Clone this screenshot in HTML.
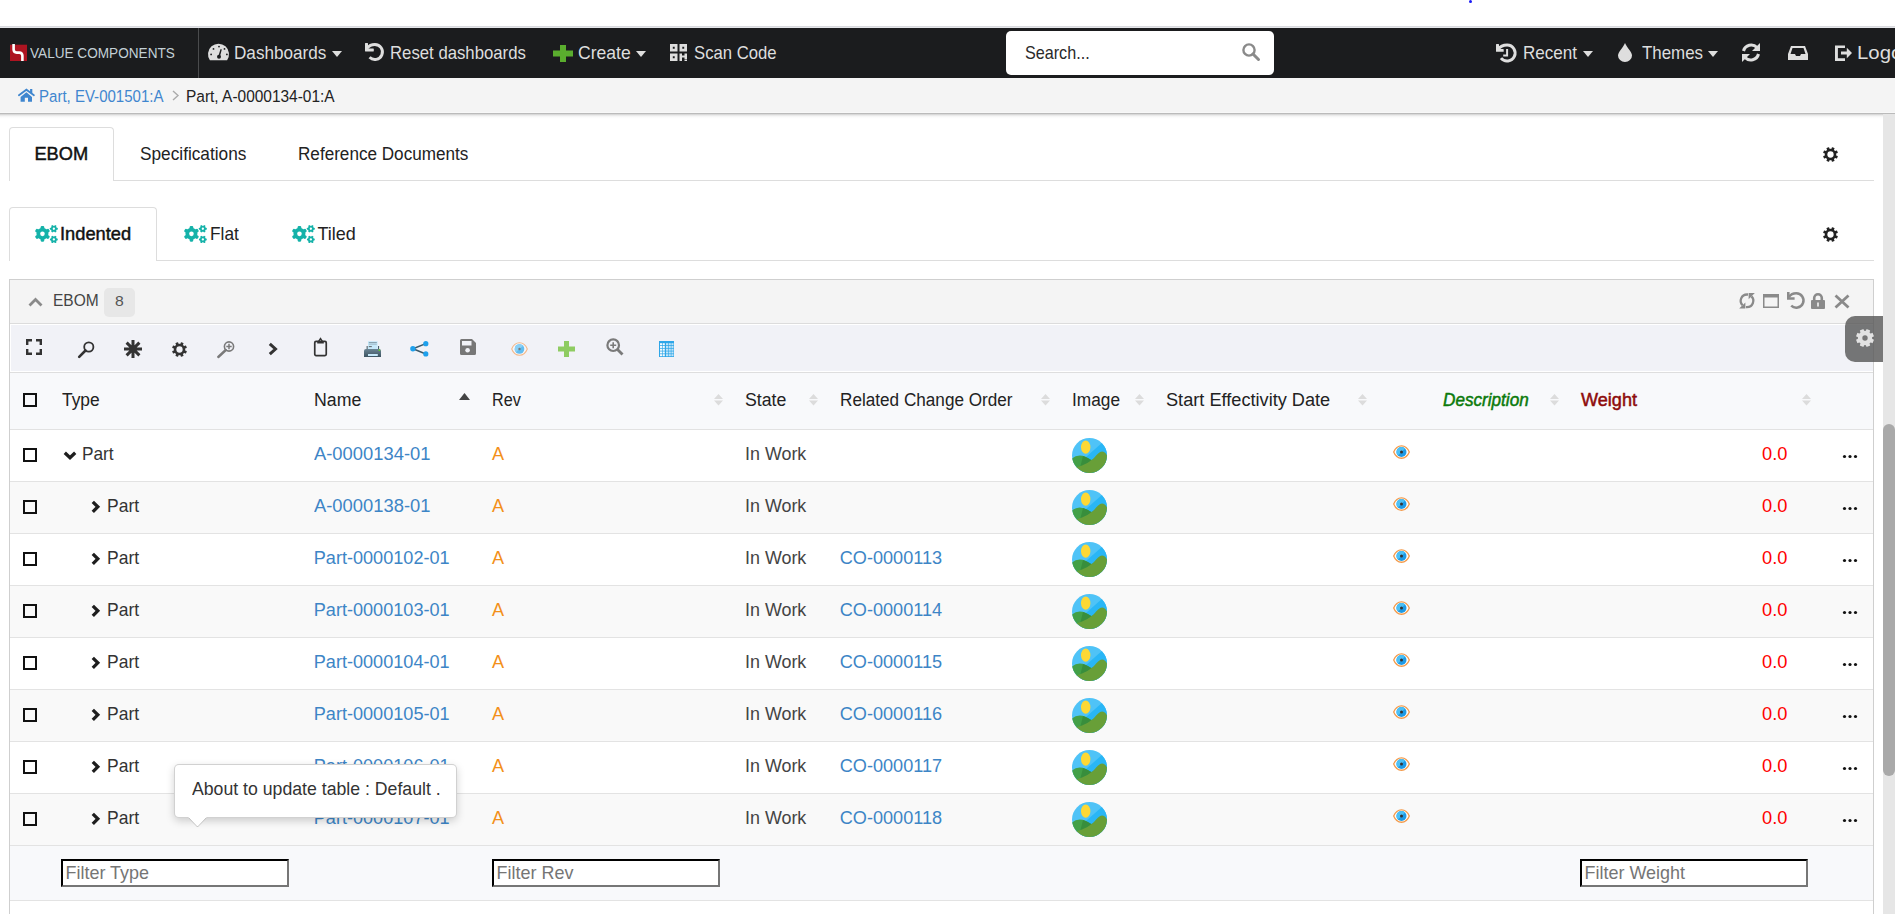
<!DOCTYPE html>
<html><head><meta charset="utf-8"><style>
html,body{margin:0;padding:0;}
body{width:1895px;height:914px;overflow:hidden;position:relative;background:#fff;font-family:"Liberation Sans",sans-serif;}
.t{position:absolute;white-space:nowrap;line-height:1;transform-origin:0 0;}
svg{overflow:visible}
</style></head><body>
<div style="position:absolute;left:0px;top:26px;width:1895px;height:1px;background:#d9dade"></div>
<div style="position:absolute;left:0px;top:27px;width:1895px;height:1px;background:#e4e5e9"></div>
<div style="position:absolute;left:1469px;top:0px;width:3px;height:3px;background:#1a1af5;border-radius:50%"></div>
<div style="position:absolute;left:0px;top:28px;width:1895px;height:50px;background:#1b1c1e"></div>
<div style="position:absolute;left:198px;top:28px;width:1px;height:50px;background:#4a4b4d"></div>
<svg style="position:absolute;left:10px;top:44px" width="17" height="17" viewBox="0 0 17 17"><rect x="0" y="0.7" width="17" height="16.3" fill="#ad1421"/><path d="M3.6 0 V5.5 Q3.6 8.6 6.7 8.6 H9.3 Q12.4 8.6 12.4 11.7 V17" stroke="#fff" stroke-width="2.6" fill="none"/></svg>
<div class="t" style="left:29.86px;top:45.17px;font-size:15.22px;color:#c3d0d6;font-weight:normal;font-style:normal;transform:scaleX(0.8936);">VALUE COMPONENTS</div>
<svg style="position:absolute;left:208px;top:43px" width="22" height="18" viewBox="0 0 22 18"><path d="M1.9 17.2 A10.5 10.5 0 1 1 19.1 17.2 Z" fill="#dedede"/><g fill="#1b1c1e"><circle cx="11" cy="13.8" r="2"/><path d="M10.2 13.5 L12.6 6 L13.8 6.4 L11.8 14 Z"/><circle cx="5.5" cy="5.9" r="0.9"/><circle cx="11" cy="3.6" r="0.9"/><circle cx="16.5" cy="5.9" r="0.9"/><circle cx="3.1" cy="11.4" r="0.9"/><circle cx="18.9" cy="11.4" r="0.9"/></g></svg>
<div class="t" style="left:234.23px;top:43.89px;font-size:18.84px;color:#dedede;font-weight:normal;font-style:normal;transform:scaleX(0.9095);">Dashboards</div>
<svg style="position:absolute;left:332px;top:51px" width="10" height="6" viewBox="0 0 10 6"><path d="M0 0 H10 L5 6 Z" fill="#dedede"/></svg>
<svg style="position:absolute;left:365px;top:43px" width="19" height="19" viewBox="0 0 19 19"><path d="M2.2 5.2 C3.8 2.9 6.7 1.45 9.9 1.45 A7.55 7.55 0 1 1 4.56 14.34" stroke="#dedede" stroke-width="2.9" fill="none"/><path d="M0.4 0 H2.6 Q3 0 3 0.4 V5.6 H8.4 Q8.8 5.6 8.8 6 V8 Q8.8 8.4 8.4 8.4 H0.4 Q0 8.4 0 8 V0.4 Q0 0 0.4 0 Z" fill="#dedede"/></svg>
<div class="t" style="left:390.06px;top:43.89px;font-size:18.84px;color:#dedede;font-weight:normal;font-style:normal;transform:scaleX(0.8890);">Reset dashboards</div>
<svg style="position:absolute;left:553px;top:45px" width="20" height="17" viewBox="0 0 20 17"><path d="M7 0 H13 V5.5 H20 V11.5 H13 V17 H7 V11.5 H0 V5.5 H7 Z" fill="#5aad2e"/></svg>
<div class="t" style="left:578.42px;top:43.89px;font-size:18.84px;color:#dedede;font-weight:normal;font-style:normal;transform:scaleX(0.9320);">Create</div>
<svg style="position:absolute;left:636px;top:51px" width="10" height="6" viewBox="0 0 10 6"><path d="M0 0 H10 L5 6 Z" fill="#dedede"/></svg>
<svg style="position:absolute;left:670px;top:44px" width="17" height="17" viewBox="0 0 17 17"><g fill="#dedede" fill-rule="evenodd"><path d="M0 0h7.5v7.5h-7.5zM2.8 2.8v1.9h1.9v-1.9z"/><path d="M9.5 0h7.5v7.5h-7.5zM12.3 2.8v1.9h1.9v-1.9z"/><path d="M0 9.5h7.5v7.5h-7.5zM2.8 12.3v1.9h1.9v-1.9z"/><path d="M9.5 9.5h2.5v2h2.5v-2h2.5v6h-2.5v-2h-2.5v3.5h-2.5z"/><rect x="14.5" y="16" width="2.5" height="1"/></g></svg>
<div class="t" style="left:694.16px;top:43.89px;font-size:18.84px;color:#dedede;font-weight:normal;font-style:normal;transform:scaleX(0.8864);">Scan Code</div>
<div style="position:absolute;left:1006px;top:31px;width:268px;height:44px;background:#fff;border-radius:5px"></div>
<div class="t" style="left:1024.89px;top:43.99px;font-size:18.84px;color:#2a2a2a;font-weight:normal;font-style:normal;transform:scaleX(0.8580);">Search...</div>
<svg style="position:absolute;left:1242px;top:43px" width="18" height="18" viewBox="0 0 18 18"><circle cx="7" cy="7" r="5.6" stroke="#8a8a8a" stroke-width="2.4" fill="none"/><path d="M11 11 L16.5 16.5" stroke="#8a8a8a" stroke-width="3" stroke-linecap="round"/></svg>
<svg style="position:absolute;left:1496px;top:43px" width="21" height="20" viewBox="0 0 21 20"><path d="M2.3 6.2 C4 3.6 7.3 2 11.1 2 A8 8 0 1 1 4.97 15.14" stroke="#dedede" stroke-width="3" fill="none"/><path d="M0.4 1 H2.6 Q3 1 3 1.4 V6 H7.3 Q7.7 6 7.7 6.4 V8.4 Q7.7 8.8 7.3 8.8 H0.4 Q0 8.8 0 8.4 V1.4 Q0 1 0.4 1 Z" fill="#dedede"/><path d="M11.1 6 V12.5 H7.2" stroke="#dedede" stroke-width="2" fill="none"/></svg>
<div class="t" style="left:1522.93px;top:43.89px;font-size:18.84px;color:#dedede;font-weight:normal;font-style:normal;transform:scaleX(0.9064);">Recent</div>
<svg style="position:absolute;left:1583px;top:51px" width="10" height="6" viewBox="0 0 10 6"><path d="M0 0 H10 L5 6 Z" fill="#dedede"/></svg>
<svg style="position:absolute;left:1618px;top:43px" width="14" height="19" viewBox="0 0 14 19"><path d="M7 0 C9 5 14 9 14 12.5 A7 6.5 0 0 1 0 12.5 C0 9 5 5 7 0 Z" fill="#dedede"/></svg>
<div class="t" style="left:1641.66px;top:43.89px;font-size:18.84px;color:#dedede;font-weight:normal;font-style:normal;transform:scaleX(0.8971);">Themes</div>
<svg style="position:absolute;left:1708px;top:51px" width="10" height="6" viewBox="0 0 10 6"><path d="M0 0 H10 L5 6 Z" fill="#dedede"/></svg>
<svg style="position:absolute;left:1741px;top:43px" width="20" height="19" viewBox="0 0 20 19"><path d="M2.5 8 A8 8 0 0 1 16 4.5" stroke="#dedede" stroke-width="3.1" fill="none"/><path d="M19 0 V8 H11 Z" fill="#dedede"/><path d="M17.5 11 A8 8 0 0 1 4 14.5" stroke="#dedede" stroke-width="3.1" fill="none"/><path d="M1 19 V11 H9 Z" fill="#dedede"/></svg>
<svg style="position:absolute;left:1788px;top:46px" width="20" height="14" viewBox="0 0 20 14"><path d="M3 0 H17 L20 8 V14 H0 V8 Z M4.5 2 L2.5 8 H7 L8 10 H12 L13 8 H17.5 L15.5 2 Z" fill="#dedede" fill-rule="evenodd"/></svg>
<svg style="position:absolute;left:1835px;top:45px" width="17" height="16" viewBox="0 0 17 16"><path d="M0 0.4 H10 V2.9 H2.9 V13.2 H10 V15.9 H0 Z" fill="#dedede"/><path d="M6 6.6 H11.8 V2.8 L17 8.1 L11.8 13.3 V9.6 H6 Z" fill="#dedede"/></svg>
<div class="t" style="left:1856.87px;top:43.89px;font-size:18.84px;color:#dedede;font-weight:normal;font-style:normal;transform:scaleX(1.0812);">Logout</div>
<div style="position:absolute;left:0px;top:113px;width:1895px;height:7px;background:linear-gradient(#a8a8a8 0px,#cdcdcd 1px,#e4e4e4 2px,#f2f2f2 3px,#fafafa 4px,#fdfdfd 5px,#fff 6px)"></div>
<div style="position:absolute;left:0px;top:78px;width:1895px;height:35px;background:#f4f4f4;border-bottom:1px solid #f8f8f8;box-sizing:border-box"></div>
<svg style="position:absolute;left:18px;top:89px" width="17" height="13" viewBox="0 0 17 13"><path d="M0.9 6.2 L8.4 0.7 L15.9 6.2" stroke="#3f86cf" stroke-width="1.8" stroke-linecap="round" fill="none"/><rect x="12.1" y="0" width="2.2" height="4" fill="#3f86cf"/><path d="M2.6 7.9 L8.4 3.2 L14 7.9 V12.8 H10 V8.8 H6.8 V12.8 H2.6 Z" fill="#3f86cf"/></svg>
<div class="t" style="left:38.90px;top:88.50px;font-size:15.65px;color:#3f86cf;font-weight:normal;font-style:normal;transform:scaleX(0.9607);">Part, EV-001501:A</div>
<svg style="position:absolute;left:172px;top:90px" width="7" height="11" viewBox="0 0 7 11"><path d="M1 1 L6 5.5 L1 10" stroke="#aaa" stroke-width="1.4" fill="none"/></svg>
<div class="t" style="left:186.06px;top:88.50px;font-size:15.65px;color:#222;font-weight:normal;font-style:normal;transform:scaleX(0.9882);">Part, A-0000134-01:A</div>
<div style="position:absolute;left:1883px;top:114px;width:12px;height:800px;background:#e6e6e6"></div>
<div style="position:absolute;left:1883px;top:424px;width:12px;height:352px;background:#a9a9a9;border-radius:6px"></div>
<div style="position:absolute;left:9px;top:180px;width:1865px;height:1px;background:#ddd"></div>
<div style="position:absolute;left:9px;top:127px;width:105px;height:54px;background:#fff;border:1px solid #ddd;border-bottom:none;border-radius:4px 4px 0 0;box-sizing:border-box"></div>
<div class="t" style="left:34.44px;top:144.98px;font-size:18.26px;color:#111;font-weight:normal;font-style:normal;-webkit-text-stroke:0.45px #111;">EBOM</div>
<div class="t" style="left:139.64px;top:144.98px;font-size:18.26px;color:#222;font-weight:normal;font-style:normal;transform:scaleX(0.9448);">Specifications</div>
<div class="t" style="left:298.13px;top:144.98px;font-size:18.26px;color:#222;font-weight:normal;font-style:normal;transform:scaleX(0.9381);">Reference Documents</div>
<svg style="position:absolute;left:1823px;top:147px" width="15" height="15" viewBox="0 0 15 15"><g fill="#222"><rect x="6.08" y="0" width="2.85" height="15.00" rx="0.45" transform="rotate(22.5 7.5 7.5)"/><rect x="6.08" y="0" width="2.85" height="15.00" rx="0.45" transform="rotate(67.5 7.5 7.5)"/><rect x="6.08" y="0" width="2.85" height="15.00" rx="0.45" transform="rotate(112.5 7.5 7.5)"/><rect x="6.08" y="0" width="2.85" height="15.00" rx="0.45" transform="rotate(157.5 7.5 7.5)"/><circle cx="7.5" cy="7.5" r="5.70"/></g><circle cx="7.5" cy="7.5" r="3.15" fill="#fff"/></svg>
<div style="position:absolute;left:9px;top:260px;width:1865px;height:1px;background:#ddd"></div>
<div style="position:absolute;left:9px;top:207px;width:148px;height:54px;background:#fff;border:1px solid #ddd;border-bottom:none;border-radius:4px 4px 0 0;box-sizing:border-box"></div>
<svg style="position:absolute;left:34px;top:225px" width="24" height="18" viewBox="0 0 24 18"><g fill="#15b2a9"><rect x="6.65" y="1.05" width="3.60" height="15.60" rx="1.08" transform="rotate(0 8.45 8.85)"/><rect x="6.65" y="1.05" width="3.60" height="15.60" rx="1.08" transform="rotate(60 8.45 8.85)"/><rect x="6.65" y="1.05" width="3.60" height="15.60" rx="1.08" transform="rotate(120 8.45 8.85)"/><circle cx="8.45" cy="8.85" r="6.0"/></g><circle cx="8.45" cy="8.85" r="2.3" fill="#fff"/><g fill="#15b2a9"><rect x="18.90" y="-0.15" width="1.90" height="7.80" rx="0.57" transform="rotate(90 19.85 3.75)"/><rect x="18.90" y="-0.15" width="1.90" height="7.80" rx="0.57" transform="rotate(30 19.85 3.75)"/><rect x="18.90" y="-0.15" width="1.90" height="7.80" rx="0.57" transform="rotate(150 19.85 3.75)"/><circle cx="19.85" cy="3.75" r="2.9"/></g><circle cx="19.85" cy="3.75" r="1.15" fill="#fff"/><g fill="#15b2a9"><rect x="18.90" y="10.55" width="1.90" height="7.80" rx="0.57" transform="rotate(90 19.85 14.45)"/><rect x="18.90" y="10.55" width="1.90" height="7.80" rx="0.57" transform="rotate(30 19.85 14.45)"/><rect x="18.90" y="10.55" width="1.90" height="7.80" rx="0.57" transform="rotate(150 19.85 14.45)"/><circle cx="19.85" cy="14.45" r="2.9"/></g><circle cx="19.85" cy="14.45" r="1.15" fill="#fff"/></svg>
<div class="t" style="left:60.35px;top:225.82px;font-size:17.97px;color:#111;font-weight:normal;font-style:normal;transform:scaleX(1.0177);-webkit-text-stroke:0.45px #111;">Indented</div>
<svg style="position:absolute;left:183px;top:225px" width="24" height="18" viewBox="0 0 24 18"><g fill="#15b2a9"><rect x="6.65" y="1.05" width="3.60" height="15.60" rx="1.08" transform="rotate(0 8.45 8.85)"/><rect x="6.65" y="1.05" width="3.60" height="15.60" rx="1.08" transform="rotate(60 8.45 8.85)"/><rect x="6.65" y="1.05" width="3.60" height="15.60" rx="1.08" transform="rotate(120 8.45 8.85)"/><circle cx="8.45" cy="8.85" r="6.0"/></g><circle cx="8.45" cy="8.85" r="2.3" fill="#fff"/><g fill="#15b2a9"><rect x="18.90" y="-0.15" width="1.90" height="7.80" rx="0.57" transform="rotate(90 19.85 3.75)"/><rect x="18.90" y="-0.15" width="1.90" height="7.80" rx="0.57" transform="rotate(30 19.85 3.75)"/><rect x="18.90" y="-0.15" width="1.90" height="7.80" rx="0.57" transform="rotate(150 19.85 3.75)"/><circle cx="19.85" cy="3.75" r="2.9"/></g><circle cx="19.85" cy="3.75" r="1.15" fill="#fff"/><g fill="#15b2a9"><rect x="18.90" y="10.55" width="1.90" height="7.80" rx="0.57" transform="rotate(90 19.85 14.45)"/><rect x="18.90" y="10.55" width="1.90" height="7.80" rx="0.57" transform="rotate(30 19.85 14.45)"/><rect x="18.90" y="10.55" width="1.90" height="7.80" rx="0.57" transform="rotate(150 19.85 14.45)"/><circle cx="19.85" cy="14.45" r="2.9"/></g><circle cx="19.85" cy="14.45" r="1.15" fill="#fff"/></svg>
<div class="t" style="left:209.52px;top:225.82px;font-size:17.97px;color:#222;font-weight:normal;font-style:normal;transform:scaleX(0.9615);">Flat</div>
<svg style="position:absolute;left:291px;top:225px" width="24" height="18" viewBox="0 0 24 18"><g fill="#15b2a9"><rect x="6.65" y="1.05" width="3.60" height="15.60" rx="1.08" transform="rotate(0 8.45 8.85)"/><rect x="6.65" y="1.05" width="3.60" height="15.60" rx="1.08" transform="rotate(60 8.45 8.85)"/><rect x="6.65" y="1.05" width="3.60" height="15.60" rx="1.08" transform="rotate(120 8.45 8.85)"/><circle cx="8.45" cy="8.85" r="6.0"/></g><circle cx="8.45" cy="8.85" r="2.3" fill="#fff"/><g fill="#15b2a9"><rect x="18.90" y="-0.15" width="1.90" height="7.80" rx="0.57" transform="rotate(90 19.85 3.75)"/><rect x="18.90" y="-0.15" width="1.90" height="7.80" rx="0.57" transform="rotate(30 19.85 3.75)"/><rect x="18.90" y="-0.15" width="1.90" height="7.80" rx="0.57" transform="rotate(150 19.85 3.75)"/><circle cx="19.85" cy="3.75" r="2.9"/></g><circle cx="19.85" cy="3.75" r="1.15" fill="#fff"/><g fill="#15b2a9"><rect x="18.90" y="10.55" width="1.90" height="7.80" rx="0.57" transform="rotate(90 19.85 14.45)"/><rect x="18.90" y="10.55" width="1.90" height="7.80" rx="0.57" transform="rotate(30 19.85 14.45)"/><rect x="18.90" y="10.55" width="1.90" height="7.80" rx="0.57" transform="rotate(150 19.85 14.45)"/><circle cx="19.85" cy="14.45" r="2.9"/></g><circle cx="19.85" cy="14.45" r="1.15" fill="#fff"/></svg>
<div class="t" style="left:317.44px;top:225.82px;font-size:17.97px;color:#222;font-weight:normal;font-style:normal;">Tiled</div>
<svg style="position:absolute;left:1823px;top:227px" width="15" height="15" viewBox="0 0 15 15"><g fill="#222"><rect x="6.08" y="0" width="2.85" height="15.00" rx="0.45" transform="rotate(22.5 7.5 7.5)"/><rect x="6.08" y="0" width="2.85" height="15.00" rx="0.45" transform="rotate(67.5 7.5 7.5)"/><rect x="6.08" y="0" width="2.85" height="15.00" rx="0.45" transform="rotate(112.5 7.5 7.5)"/><rect x="6.08" y="0" width="2.85" height="15.00" rx="0.45" transform="rotate(157.5 7.5 7.5)"/><circle cx="7.5" cy="7.5" r="5.70"/></g><circle cx="7.5" cy="7.5" r="3.15" fill="#fff"/></svg>
<div style="position:absolute;left:9px;top:279px;width:1865px;height:700px;border:1px solid #cfcfcf;box-sizing:border-box;background:#fff"></div>
<div style="position:absolute;left:10px;top:280px;width:1863px;height:43px;background:#f4f4f4"></div>
<div style="position:absolute;left:10px;top:323px;width:1863px;height:1px;background:#dcdcdc"></div>
<svg style="position:absolute;left:28px;top:297px" width="15" height="10" viewBox="0 0 15 10"><path d="M1.5 8.5 L7.5 2.5 L13.5 8.5" stroke="#8a8a8a" stroke-width="2.8" fill="none"/></svg>
<div class="t" style="left:53.26px;top:293.17px;font-size:15.80px;color:#444;font-weight:normal;font-style:normal;transform:scaleX(0.9837);">EBOM</div>
<div style="position:absolute;left:104px;top:288px;width:31px;height:29px;background:#e7e7e7;border-radius:5px"></div>
<div class="t" style="left:115.17px;top:294.18px;font-size:14.49px;color:#555;font-weight:normal;font-style:normal;transform:scaleX(1.0864);">8</div>
<div style="position:absolute;left:11px;top:325px;width:1862px;height:46px;background:#f1f2f7"></div>
<div style="position:absolute;left:10px;top:372px;width:1863px;height:1px;background:#dedede"></div>
<div style="position:absolute;left:10px;top:373px;width:1863px;height:56px;background:#f8f9fb"></div>
<div style="position:absolute;left:10px;top:429px;width:1863px;height:1px;background:#e2e2e2"></div>
<svg style="position:absolute;left:1738px;top:292px" width="18" height="18" viewBox="0 0 18 18"><path d="M10 2.5 H9 A6.3 6.3 0 0 0 4.55 13.25" stroke="#8a8a8a" stroke-width="2.3" fill="none"/><path d="M1.2 16.6 H7.4 V10.6 Z" fill="#8a8a8a"/><path d="M8 15.1 H9 A6.3 6.3 0 0 0 13.45 4.35" stroke="#8a8a8a" stroke-width="2.3" fill="none"/><path d="M10.6 1 H16.8 L10.6 7.2 Z" fill="#8a8a8a"/></svg>
<svg style="position:absolute;left:1763px;top:294px" width="16" height="14" viewBox="0 0 16 14"><rect x="0.75" y="0.75" width="14.5" height="12.5" fill="none" stroke="#8a8a8a" stroke-width="1.5"/><rect x="0" y="0" width="16" height="3.5" fill="#8a8a8a"/></svg>
<svg style="position:absolute;left:1787px;top:292px" width="18" height="18" viewBox="0 0 18 18"><path d="M1.9 5 C3.4 2.8 6 1.3 9.3 1.3 A7.2 7.2 0 1 1 4.2 13.6" stroke="#8a8a8a" stroke-width="2.5" fill="none"/><path d="M0 0 H2.6 V5.2 H7.6 V7.8 H0 Z" fill="#8a8a8a"/></svg>
<svg style="position:absolute;left:1811px;top:293px" width="14" height="16" viewBox="0 0 14 16"><path d="M3.2 7 V5 A3.8 3.8 0 0 1 10.8 5 V7" stroke="#8a8a8a" stroke-width="2.6" fill="none"/><rect x="0" y="7" width="14" height="9" rx="1" fill="#8a8a8a"/><rect x="6.2" y="9.5" width="1.6" height="4" fill="#f4f4f4"/></svg>
<svg style="position:absolute;left:1834px;top:294px" width="16" height="15" viewBox="0 0 16 15"><path d="M1.5 1.5 L14.5 13.5 M14.5 1.5 L1.5 13.5" stroke="#8a8a8a" stroke-width="2.8"/></svg>
<svg style="position:absolute;left:26px;top:339px" width="16" height="16" viewBox="0 0 16 16"><path d="M1.2 6 V1.2 H6 M10 1.2 H14.8 V6 M14.8 10 V14.8 H10 M6 14.8 H1.2 V10" stroke="#333" stroke-width="2.4" fill="none"/></svg>
<svg style="position:absolute;left:78px;top:341px" width="17" height="17" viewBox="0 0 17 17"><circle cx="10.8" cy="6" r="4.6" stroke="#333" stroke-width="1.8" fill="none"/><path d="M7.5 9.5 L1.2 15.8" stroke="#333" stroke-width="2.6" stroke-linecap="round"/></svg>
<svg style="position:absolute;left:124px;top:340px" width="18" height="18" viewBox="0 0 18 18"><g stroke="#333" stroke-width="3"><path d="M9 0 V18 M0 9 H18 M2.6 2.6 L15.4 15.4 M15.4 2.6 L2.6 15.4"/></g></svg>
<svg style="position:absolute;left:172px;top:342px" width="15" height="15" viewBox="0 0 15 15"><g fill="#333"><rect x="6.08" y="0" width="2.85" height="15.00" rx="0.45" transform="rotate(22.5 7.5 7.5)"/><rect x="6.08" y="0" width="2.85" height="15.00" rx="0.45" transform="rotate(67.5 7.5 7.5)"/><rect x="6.08" y="0" width="2.85" height="15.00" rx="0.45" transform="rotate(112.5 7.5 7.5)"/><rect x="6.08" y="0" width="2.85" height="15.00" rx="0.45" transform="rotate(157.5 7.5 7.5)"/><circle cx="7.5" cy="7.5" r="5.70"/></g><circle cx="7.5" cy="7.5" r="3.15" fill="#f1f2f7"/></svg>
<svg style="position:absolute;left:217px;top:341px" width="18" height="17" viewBox="0 0 18 17"><circle cx="12" cy="5.5" r="4.6" stroke="#7a7a7a" stroke-width="1.6" fill="none"/><path d="M12 2.8 V8.2 M9.3 5.5 H14.7" stroke="#7a7a7a" stroke-width="1.5"/><path d="M8.8 9 L1.3 16" stroke="#7a7a7a" stroke-width="2.4" stroke-linecap="round"/></svg>
<svg style="position:absolute;left:268px;top:342px" width="10" height="14" viewBox="0 0 10 14"><path d="M1.8 1.8 L7.5 7 L1.8 12.2" stroke="#333" stroke-width="3" fill="none"/></svg>
<svg style="position:absolute;left:313px;top:337px" width="15" height="20" viewBox="0 0 15 20"><rect x="1.75" y="4.35" width="11.5" height="14.3" rx="1.3" stroke="#333" stroke-width="1.7" fill="none"/><rect x="4.2" y="4.6" width="6.6" height="1.9" fill="#333"/><path d="M5.3 4.8 L7.5 1.6 L9.7 4.8" stroke="#333" stroke-width="1.4" fill="none"/></svg>
<svg style="position:absolute;left:363px;top:340px" width="19" height="18" viewBox="0 0 19 18"><defs><linearGradient id="pg" x1="0" y1="0" x2="0" y2="1"><stop offset="0" stop-color="#6a8493"/><stop offset="1" stop-color="#3d5461"/></linearGradient></defs><rect x="5" y="1.2" width="9.6" height="8" fill="#c6e9fa"/><rect x="5.8" y="2" width="8" height="1" fill="#8aa3b0"/><rect x="5.8" y="3.6" width="8" height="1" fill="#9ab3c0"/><rect x="5.8" y="6.2" width="3" height="0.9" fill="#555"/><rect x="3.6" y="6" width="1.1" height="3.5" fill="#4a606c"/><rect x="15" y="6" width="1.1" height="3.5" fill="#4a606c"/><path d="M1 11 Q1 9 3 9 H16 Q18 9 18 11 V17 H1 Z" fill="url(#pg)"/><rect x="5" y="14" width="9.8" height="2" fill="#c6e9fa"/><circle cx="16.4" cy="10.2" r="0.9" fill="#5fd12a"/></svg>
<svg style="position:absolute;left:410px;top:341px" width="19" height="16" viewBox="0 0 19 16"><path d="M3 7.8 L15.8 2.6 M3 7.8 L15.8 13" stroke="#3c5a6a" stroke-width="1.5"/><circle cx="2.9" cy="7.8" r="2.7" fill="#1ea0ec"/><circle cx="15.8" cy="2.7" r="2.6" fill="#1ea0ec"/><circle cx="15.8" cy="12.9" r="2.6" fill="#1ea0ec"/></svg>
<svg style="position:absolute;left:460px;top:339px" width="16" height="16" viewBox="0 0 16 16"><path d="M0 1.5 A1.5 1.5 0 0 1 1.5 0 H12 L16 4 V14.5 A1.5 1.5 0 0 1 14.5 16 H1.5 A1.5 1.5 0 0 1 0 14.5 Z" fill="#777"/><rect x="2" y="2" width="9.5" height="4.5" fill="#f1f2f7"/><circle cx="7.6" cy="11.3" r="2.3" fill="#f1f2f7"/></svg>
<svg style="position:absolute;left:511px;top:342px" width="17" height="14" viewBox="0 0 17 14"><path d="M0.7 7 C4 -1.3 13 -1.3 16.3 7 C13 15.3 4 15.3 0.7 7 Z" fill="#f4f5f9" stroke="#f3b98a" stroke-width="1.1"/><circle cx="8.5" cy="7" r="4.8" fill="#62bdf0"/><path d="M8.5 2.2 A4.8 4.8 0 0 0 5 10.3 L12 3.7 A4.8 4.8 0 0 0 8.5 2.2Z" fill="#8ad0f5"/><circle cx="8.5" cy="7" r="1.2" fill="#777"/></svg>
<svg style="position:absolute;left:558px;top:341px" width="17" height="16" viewBox="0 0 17 16"><path d="M6 0 H11 V5.5 H17 V10.5 H11 V16 H6 V10.5 H0 V5.5 H6 Z" fill="#8fcc62"/></svg>
<svg style="position:absolute;left:606px;top:338px" width="18" height="18" viewBox="0 0 18 18"><circle cx="7.2" cy="7.2" r="5.8" stroke="#7a7a7a" stroke-width="2.2" fill="none"/><path d="M7.2 4.2 V10.2 M4.2 7.2 H10.2" stroke="#7a7a7a" stroke-width="1.6"/><path d="M11.5 11.5 L16.5 16.5" stroke="#7a7a7a" stroke-width="2.8"/></svg>
<svg style="position:absolute;left:659px;top:341px" width="15" height="16" viewBox="0 0 15 16"><rect x="0" y="0" width="15" height="16" fill="#2ea6e8"/><rect x="1.00" y="2.20" width="2.1" height="2" fill="#fff" opacity="0.95"/><rect x="1.00" y="4.95" width="2.1" height="2" fill="#fff" opacity="0.95"/><rect x="1.00" y="7.70" width="2.1" height="2" fill="#fff" opacity="0.95"/><rect x="1.00" y="10.45" width="2.1" height="2" fill="#fff" opacity="0.95"/><rect x="1.00" y="13.20" width="2.1" height="2" fill="#fff" opacity="0.95"/><rect x="3.70" y="2.20" width="2.1" height="2" fill="#fff" opacity="0.95"/><rect x="3.70" y="4.95" width="2.1" height="2" fill="#fff" opacity="0.95"/><rect x="3.70" y="7.70" width="2.1" height="2" fill="#fff" opacity="0.95"/><rect x="3.70" y="10.45" width="2.1" height="2" fill="#fff" opacity="0.95"/><rect x="3.70" y="13.20" width="2.1" height="2" fill="#fff" opacity="0.95"/><rect x="7.00" y="2.20" width="2.1" height="2" fill="#fff" opacity="0.7"/><rect x="7.00" y="4.95" width="2.1" height="2" fill="#fff" opacity="0.7"/><rect x="7.00" y="7.70" width="2.1" height="2" fill="#fff" opacity="0.7"/><rect x="7.00" y="10.45" width="2.1" height="2" fill="#fff" opacity="0.7"/><rect x="7.00" y="13.20" width="2.1" height="2" fill="#fff" opacity="0.7"/><rect x="9.70" y="2.20" width="2.1" height="2" fill="#fff" opacity="0.7"/><rect x="9.70" y="4.95" width="2.1" height="2" fill="#fff" opacity="0.7"/><rect x="9.70" y="7.70" width="2.1" height="2" fill="#fff" opacity="0.7"/><rect x="9.70" y="10.45" width="2.1" height="2" fill="#fff" opacity="0.7"/><rect x="9.70" y="13.20" width="2.1" height="2" fill="#fff" opacity="0.7"/><rect x="12.40" y="2.20" width="2.1" height="2" fill="#fff" opacity="0.7"/><rect x="12.40" y="4.95" width="2.1" height="2" fill="#fff" opacity="0.7"/><rect x="12.40" y="7.70" width="2.1" height="2" fill="#fff" opacity="0.7"/><rect x="12.40" y="10.45" width="2.1" height="2" fill="#fff" opacity="0.7"/><rect x="12.40" y="13.20" width="2.1" height="2" fill="#fff" opacity="0.7"/></svg>
<div style="position:absolute;left:1845px;top:316px;width:38px;height:46px;background:rgba(85,85,85,0.8);border-radius:10px 0 0 10px"></div>
<svg style="position:absolute;left:1856px;top:329px" width="18" height="18" viewBox="0 0 18 18"><g fill="#e2e2e2"><rect x="7.02" y="0" width="3.96" height="18.00" rx="0.54" transform="rotate(22.5 9.0 9.0)"/><rect x="7.02" y="0" width="3.96" height="18.00" rx="0.54" transform="rotate(67.5 9.0 9.0)"/><rect x="7.02" y="0" width="3.96" height="18.00" rx="0.54" transform="rotate(112.5 9.0 9.0)"/><rect x="7.02" y="0" width="3.96" height="18.00" rx="0.54" transform="rotate(157.5 9.0 9.0)"/><circle cx="9.0" cy="9.0" r="7.20"/></g><circle cx="9.0" cy="9.0" r="2.70" fill="#767676"/></svg>
<div style="position:absolute;left:23px;top:393px;width:14px;height:14px;border:2px solid #111;box-sizing:border-box"></div>
<div class="t" style="left:61.55px;top:390.66px;font-size:18.41px;color:#222;font-weight:normal;font-style:normal;transform:scaleX(0.9443);">Type</div>
<div class="t" style="left:313.78px;top:390.66px;font-size:18.41px;color:#222;font-weight:normal;font-style:normal;transform:scaleX(0.9626);">Name</div>
<svg style="position:absolute;left:459px;top:393px" width="11" height="7" viewBox="0 0 11 7"><path d="M5.5 0 L11 7 H0 Z" fill="#444"/></svg>
<div class="t" style="left:492.21px;top:390.66px;font-size:18.41px;color:#222;font-weight:normal;font-style:normal;transform:scaleX(0.8789);">Rev</div>
<svg style="position:absolute;left:714px;top:394px" width="9" height="12" viewBox="0 0 9 12"><path d="M4.5 0 L9 5 H0 Z M0 6.5 H9 L4.5 11.5 Z" fill="#dcdcdc"/></svg>
<div class="t" style="left:744.81px;top:390.66px;font-size:18.41px;color:#222;font-weight:normal;font-style:normal;transform:scaleX(0.9629);">State</div>
<svg style="position:absolute;left:809px;top:394px" width="9" height="12" viewBox="0 0 9 12"><path d="M4.5 0 L9 5 H0 Z M0 6.5 H9 L4.5 11.5 Z" fill="#dcdcdc"/></svg>
<div class="t" style="left:840.03px;top:390.66px;font-size:18.41px;color:#222;font-weight:normal;font-style:normal;transform:scaleX(0.9319);">Related Change Order</div>
<svg style="position:absolute;left:1041px;top:394px" width="9" height="12" viewBox="0 0 9 12"><path d="M4.5 0 L9 5 H0 Z M0 6.5 H9 L4.5 11.5 Z" fill="#dcdcdc"/></svg>
<div class="t" style="left:1071.75px;top:390.66px;font-size:18.41px;color:#222;font-weight:normal;font-style:normal;transform:scaleX(0.9384);">Image</div>
<svg style="position:absolute;left:1135px;top:394px" width="9" height="12" viewBox="0 0 9 12"><path d="M4.5 0 L9 5 H0 Z M0 6.5 H9 L4.5 11.5 Z" fill="#dcdcdc"/></svg>
<div class="t" style="left:1165.89px;top:390.66px;font-size:18.41px;color:#222;font-weight:normal;font-style:normal;transform:scaleX(0.9869);">Start Effectivity Date</div>
<svg style="position:absolute;left:1358px;top:394px" width="9" height="12" viewBox="0 0 9 12"><path d="M4.5 0 L9 5 H0 Z M0 6.5 H9 L4.5 11.5 Z" fill="#dcdcdc"/></svg>
<div class="t" style="left:1443.19px;top:390.66px;font-size:18.41px;color:#0b7a0b;font-weight:normal;font-style:italic;transform:scaleX(0.9312);-webkit-text-stroke:0.5px #0b7a0b;">Description</div>
<svg style="position:absolute;left:1550px;top:394px" width="9" height="12" viewBox="0 0 9 12"><path d="M4.5 0 L9 5 H0 Z M0 6.5 H9 L4.5 11.5 Z" fill="#dcdcdc"/></svg>
<div class="t" style="left:1581.00px;top:390.66px;font-size:18.41px;color:#8e0b0b;font-weight:normal;font-style:normal;transform:scaleX(0.9829);-webkit-text-stroke:0.5px #8e0b0b;">Weight</div>
<svg style="position:absolute;left:1802px;top:394px" width="9" height="12" viewBox="0 0 9 12"><path d="M4.5 0 L9 5 H0 Z M0 6.5 H9 L4.5 11.5 Z" fill="#dcdcdc"/></svg>
<div style="position:absolute;left:10px;top:481px;width:1863px;height:1px;background:#e3e3e3"></div>
<div style="position:absolute;left:23px;top:448px;width:14px;height:14px;border:2px solid #111;box-sizing:border-box"></div>
<svg style="position:absolute;left:63px;top:450.5px" width="14" height="9" viewBox="0 0 14 9"><path d="M1.8 1.8 L7 6.8 L12.2 1.8" stroke="#1e1e1e" stroke-width="3.3" fill="none"/></svg>
<div class="t" style="left:82.22px;top:445.08px;font-size:18.26px;color:#333;font-weight:normal;font-style:normal;transform:scaleX(0.9450);">Part</div>
<div class="t" style="left:314.20px;top:445.20px;font-size:18.12px;color:#3d85c6;font-weight:normal;font-style:normal;transform:scaleX(1.0145);">A-0000134-01</div>
<div class="t" style="left:492.00px;top:445.20px;font-size:18.12px;color:#f39019;font-weight:normal;font-style:normal;">A</div>
<div class="t" style="left:744.79px;top:445.08px;font-size:18.26px;color:#444;font-weight:normal;font-style:normal;transform:scaleX(0.9805);">In Work</div>
<svg style="position:absolute;left:1072px;top:437.5px" width="35" height="35" viewBox="0 0 35 35"><defs><clipPath id="c0"><circle cx="17.5" cy="17.5" r="17.5"/></clipPath></defs><g clip-path="url(#c0)"><rect width="35" height="35" fill="#4fc3f7"/><path d="M35 0.6 L0 31.3 V35 H35 Z" fill="#29b6f6"/><ellipse cx="13.7" cy="9.2" rx="4.7" ry="6.6" fill="#fdd835"/><path d="M0 20.5 Q8 13.5 20 22.6 L8 30 L0 30 Z" fill="#43a047"/><path d="M11 17.9 Q16 19.5 20 22.6 L8 30 Z" fill="#388e3c"/><path d="M4 29.5 C13 27 18 23.5 22 20 C25 16.8 27.5 13.6 30 13.6 Q33 13.6 35 17.5 V35 H0 V30 Z" fill="#689f38"/></g></svg>
<svg style="position:absolute;left:1393px;top:445px" width="17" height="14" viewBox="0 0 17 14"><path d="M0.7 7 C4 -1.3 13 -1.3 16.3 7 C13 15.3 4 15.3 0.7 7 Z" fill="#fff" stroke="#f39a4a" stroke-width="1.3"/><circle cx="8.5" cy="7" r="5" fill="#1e9be6"/><path d="M8.5 2 A5 5 0 0 0 4.9 10.5 L12.1 3.5 A5 5 0 0 0 8.5 2Z" fill="#4cc0f5"/><circle cx="8.5" cy="7" r="1.5" fill="#333"/></svg>
<div class="t" style="left:1761.77px;top:444.22px;font-size:19.28px;color:#ff0000;font-weight:normal;font-style:normal;transform:scaleX(0.9465);">0.0</div>
<svg style="position:absolute;left:1843px;top:455px" width="14" height="3" viewBox="0 0 14 3"><circle cx="1.5" cy="1.5" r="1.6" fill="#111"/><circle cx="7" cy="1.5" r="1.6" fill="#111"/><circle cx="12.5" cy="1.5" r="1.6" fill="#111"/></svg>
<div style="position:absolute;left:10px;top:482px;width:1863px;height:51px;background:#f9f9f9"></div>
<div style="position:absolute;left:10px;top:533px;width:1863px;height:1px;background:#e3e3e3"></div>
<div style="position:absolute;left:23px;top:500px;width:14px;height:14px;border:2px solid #111;box-sizing:border-box"></div>
<svg style="position:absolute;left:91px;top:500px" width="9" height="14" viewBox="0 0 9 14"><path d="M1.8 1.8 L6.8 6.8 L1.8 11.8" stroke="#1e1e1e" stroke-width="3.3" fill="none"/></svg>
<div class="t" style="left:107.00px;top:497.08px;font-size:18.26px;color:#333;font-weight:normal;font-style:normal;transform:scaleX(0.9576);">Part</div>
<div class="t" style="left:314.20px;top:497.20px;font-size:18.12px;color:#3d85c6;font-weight:normal;font-style:normal;transform:scaleX(1.0145);">A-0000138-01</div>
<div class="t" style="left:492.00px;top:497.20px;font-size:18.12px;color:#f39019;font-weight:normal;font-style:normal;">A</div>
<div class="t" style="left:744.79px;top:497.08px;font-size:18.26px;color:#444;font-weight:normal;font-style:normal;transform:scaleX(0.9805);">In Work</div>
<svg style="position:absolute;left:1072px;top:489.5px" width="35" height="35" viewBox="0 0 35 35"><defs><clipPath id="c1"><circle cx="17.5" cy="17.5" r="17.5"/></clipPath></defs><g clip-path="url(#c1)"><rect width="35" height="35" fill="#4fc3f7"/><path d="M35 0.6 L0 31.3 V35 H35 Z" fill="#29b6f6"/><ellipse cx="13.7" cy="9.2" rx="4.7" ry="6.6" fill="#fdd835"/><path d="M0 20.5 Q8 13.5 20 22.6 L8 30 L0 30 Z" fill="#43a047"/><path d="M11 17.9 Q16 19.5 20 22.6 L8 30 Z" fill="#388e3c"/><path d="M4 29.5 C13 27 18 23.5 22 20 C25 16.8 27.5 13.6 30 13.6 Q33 13.6 35 17.5 V35 H0 V30 Z" fill="#689f38"/></g></svg>
<svg style="position:absolute;left:1393px;top:497px" width="17" height="14" viewBox="0 0 17 14"><path d="M0.7 7 C4 -1.3 13 -1.3 16.3 7 C13 15.3 4 15.3 0.7 7 Z" fill="#fff" stroke="#f39a4a" stroke-width="1.3"/><circle cx="8.5" cy="7" r="5" fill="#1e9be6"/><path d="M8.5 2 A5 5 0 0 0 4.9 10.5 L12.1 3.5 A5 5 0 0 0 8.5 2Z" fill="#4cc0f5"/><circle cx="8.5" cy="7" r="1.5" fill="#333"/></svg>
<div class="t" style="left:1761.77px;top:496.22px;font-size:19.28px;color:#ff0000;font-weight:normal;font-style:normal;transform:scaleX(0.9465);">0.0</div>
<svg style="position:absolute;left:1843px;top:507px" width="14" height="3" viewBox="0 0 14 3"><circle cx="1.5" cy="1.5" r="1.6" fill="#111"/><circle cx="7" cy="1.5" r="1.6" fill="#111"/><circle cx="12.5" cy="1.5" r="1.6" fill="#111"/></svg>
<div style="position:absolute;left:10px;top:585px;width:1863px;height:1px;background:#e3e3e3"></div>
<div style="position:absolute;left:23px;top:552px;width:14px;height:14px;border:2px solid #111;box-sizing:border-box"></div>
<svg style="position:absolute;left:91px;top:552px" width="9" height="14" viewBox="0 0 9 14"><path d="M1.8 1.8 L6.8 6.8 L1.8 11.8" stroke="#1e1e1e" stroke-width="3.3" fill="none"/></svg>
<div class="t" style="left:107.00px;top:549.08px;font-size:18.26px;color:#333;font-weight:normal;font-style:normal;transform:scaleX(0.9576);">Part</div>
<div class="t" style="left:313.74px;top:549.20px;font-size:18.12px;color:#3d85c6;font-weight:normal;font-style:normal;">Part-0000102-01</div>
<div class="t" style="left:492.00px;top:549.20px;font-size:18.12px;color:#f39019;font-weight:normal;font-style:normal;">A</div>
<div class="t" style="left:744.79px;top:549.08px;font-size:18.26px;color:#444;font-weight:normal;font-style:normal;transform:scaleX(0.9805);">In Work</div>
<div class="t" style="left:839.79px;top:549.20px;font-size:18.12px;color:#3d85c6;font-weight:normal;font-style:normal;">CO-0000113</div>
<svg style="position:absolute;left:1072px;top:541.5px" width="35" height="35" viewBox="0 0 35 35"><defs><clipPath id="c2"><circle cx="17.5" cy="17.5" r="17.5"/></clipPath></defs><g clip-path="url(#c2)"><rect width="35" height="35" fill="#4fc3f7"/><path d="M35 0.6 L0 31.3 V35 H35 Z" fill="#29b6f6"/><ellipse cx="13.7" cy="9.2" rx="4.7" ry="6.6" fill="#fdd835"/><path d="M0 20.5 Q8 13.5 20 22.6 L8 30 L0 30 Z" fill="#43a047"/><path d="M11 17.9 Q16 19.5 20 22.6 L8 30 Z" fill="#388e3c"/><path d="M4 29.5 C13 27 18 23.5 22 20 C25 16.8 27.5 13.6 30 13.6 Q33 13.6 35 17.5 V35 H0 V30 Z" fill="#689f38"/></g></svg>
<svg style="position:absolute;left:1393px;top:549px" width="17" height="14" viewBox="0 0 17 14"><path d="M0.7 7 C4 -1.3 13 -1.3 16.3 7 C13 15.3 4 15.3 0.7 7 Z" fill="#fff" stroke="#f39a4a" stroke-width="1.3"/><circle cx="8.5" cy="7" r="5" fill="#1e9be6"/><path d="M8.5 2 A5 5 0 0 0 4.9 10.5 L12.1 3.5 A5 5 0 0 0 8.5 2Z" fill="#4cc0f5"/><circle cx="8.5" cy="7" r="1.5" fill="#333"/></svg>
<div class="t" style="left:1761.77px;top:548.22px;font-size:19.28px;color:#ff0000;font-weight:normal;font-style:normal;transform:scaleX(0.9465);">0.0</div>
<svg style="position:absolute;left:1843px;top:559px" width="14" height="3" viewBox="0 0 14 3"><circle cx="1.5" cy="1.5" r="1.6" fill="#111"/><circle cx="7" cy="1.5" r="1.6" fill="#111"/><circle cx="12.5" cy="1.5" r="1.6" fill="#111"/></svg>
<div style="position:absolute;left:10px;top:586px;width:1863px;height:51px;background:#f9f9f9"></div>
<div style="position:absolute;left:10px;top:637px;width:1863px;height:1px;background:#e3e3e3"></div>
<div style="position:absolute;left:23px;top:604px;width:14px;height:14px;border:2px solid #111;box-sizing:border-box"></div>
<svg style="position:absolute;left:91px;top:604px" width="9" height="14" viewBox="0 0 9 14"><path d="M1.8 1.8 L6.8 6.8 L1.8 11.8" stroke="#1e1e1e" stroke-width="3.3" fill="none"/></svg>
<div class="t" style="left:107.00px;top:601.08px;font-size:18.26px;color:#333;font-weight:normal;font-style:normal;transform:scaleX(0.9576);">Part</div>
<div class="t" style="left:313.74px;top:601.20px;font-size:18.12px;color:#3d85c6;font-weight:normal;font-style:normal;">Part-0000103-01</div>
<div class="t" style="left:492.00px;top:601.20px;font-size:18.12px;color:#f39019;font-weight:normal;font-style:normal;">A</div>
<div class="t" style="left:744.79px;top:601.08px;font-size:18.26px;color:#444;font-weight:normal;font-style:normal;transform:scaleX(0.9805);">In Work</div>
<div class="t" style="left:839.79px;top:601.20px;font-size:18.12px;color:#3d85c6;font-weight:normal;font-style:normal;">CO-0000114</div>
<svg style="position:absolute;left:1072px;top:593.5px" width="35" height="35" viewBox="0 0 35 35"><defs><clipPath id="c3"><circle cx="17.5" cy="17.5" r="17.5"/></clipPath></defs><g clip-path="url(#c3)"><rect width="35" height="35" fill="#4fc3f7"/><path d="M35 0.6 L0 31.3 V35 H35 Z" fill="#29b6f6"/><ellipse cx="13.7" cy="9.2" rx="4.7" ry="6.6" fill="#fdd835"/><path d="M0 20.5 Q8 13.5 20 22.6 L8 30 L0 30 Z" fill="#43a047"/><path d="M11 17.9 Q16 19.5 20 22.6 L8 30 Z" fill="#388e3c"/><path d="M4 29.5 C13 27 18 23.5 22 20 C25 16.8 27.5 13.6 30 13.6 Q33 13.6 35 17.5 V35 H0 V30 Z" fill="#689f38"/></g></svg>
<svg style="position:absolute;left:1393px;top:601px" width="17" height="14" viewBox="0 0 17 14"><path d="M0.7 7 C4 -1.3 13 -1.3 16.3 7 C13 15.3 4 15.3 0.7 7 Z" fill="#fff" stroke="#f39a4a" stroke-width="1.3"/><circle cx="8.5" cy="7" r="5" fill="#1e9be6"/><path d="M8.5 2 A5 5 0 0 0 4.9 10.5 L12.1 3.5 A5 5 0 0 0 8.5 2Z" fill="#4cc0f5"/><circle cx="8.5" cy="7" r="1.5" fill="#333"/></svg>
<div class="t" style="left:1761.77px;top:600.22px;font-size:19.28px;color:#ff0000;font-weight:normal;font-style:normal;transform:scaleX(0.9465);">0.0</div>
<svg style="position:absolute;left:1843px;top:611px" width="14" height="3" viewBox="0 0 14 3"><circle cx="1.5" cy="1.5" r="1.6" fill="#111"/><circle cx="7" cy="1.5" r="1.6" fill="#111"/><circle cx="12.5" cy="1.5" r="1.6" fill="#111"/></svg>
<div style="position:absolute;left:10px;top:689px;width:1863px;height:1px;background:#e3e3e3"></div>
<div style="position:absolute;left:23px;top:656px;width:14px;height:14px;border:2px solid #111;box-sizing:border-box"></div>
<svg style="position:absolute;left:91px;top:656px" width="9" height="14" viewBox="0 0 9 14"><path d="M1.8 1.8 L6.8 6.8 L1.8 11.8" stroke="#1e1e1e" stroke-width="3.3" fill="none"/></svg>
<div class="t" style="left:107.00px;top:653.08px;font-size:18.26px;color:#333;font-weight:normal;font-style:normal;transform:scaleX(0.9576);">Part</div>
<div class="t" style="left:313.74px;top:653.20px;font-size:18.12px;color:#3d85c6;font-weight:normal;font-style:normal;">Part-0000104-01</div>
<div class="t" style="left:492.00px;top:653.20px;font-size:18.12px;color:#f39019;font-weight:normal;font-style:normal;">A</div>
<div class="t" style="left:744.79px;top:653.08px;font-size:18.26px;color:#444;font-weight:normal;font-style:normal;transform:scaleX(0.9805);">In Work</div>
<div class="t" style="left:839.79px;top:653.20px;font-size:18.12px;color:#3d85c6;font-weight:normal;font-style:normal;">CO-0000115</div>
<svg style="position:absolute;left:1072px;top:645.5px" width="35" height="35" viewBox="0 0 35 35"><defs><clipPath id="c4"><circle cx="17.5" cy="17.5" r="17.5"/></clipPath></defs><g clip-path="url(#c4)"><rect width="35" height="35" fill="#4fc3f7"/><path d="M35 0.6 L0 31.3 V35 H35 Z" fill="#29b6f6"/><ellipse cx="13.7" cy="9.2" rx="4.7" ry="6.6" fill="#fdd835"/><path d="M0 20.5 Q8 13.5 20 22.6 L8 30 L0 30 Z" fill="#43a047"/><path d="M11 17.9 Q16 19.5 20 22.6 L8 30 Z" fill="#388e3c"/><path d="M4 29.5 C13 27 18 23.5 22 20 C25 16.8 27.5 13.6 30 13.6 Q33 13.6 35 17.5 V35 H0 V30 Z" fill="#689f38"/></g></svg>
<svg style="position:absolute;left:1393px;top:653px" width="17" height="14" viewBox="0 0 17 14"><path d="M0.7 7 C4 -1.3 13 -1.3 16.3 7 C13 15.3 4 15.3 0.7 7 Z" fill="#fff" stroke="#f39a4a" stroke-width="1.3"/><circle cx="8.5" cy="7" r="5" fill="#1e9be6"/><path d="M8.5 2 A5 5 0 0 0 4.9 10.5 L12.1 3.5 A5 5 0 0 0 8.5 2Z" fill="#4cc0f5"/><circle cx="8.5" cy="7" r="1.5" fill="#333"/></svg>
<div class="t" style="left:1761.77px;top:652.22px;font-size:19.28px;color:#ff0000;font-weight:normal;font-style:normal;transform:scaleX(0.9465);">0.0</div>
<svg style="position:absolute;left:1843px;top:663px" width="14" height="3" viewBox="0 0 14 3"><circle cx="1.5" cy="1.5" r="1.6" fill="#111"/><circle cx="7" cy="1.5" r="1.6" fill="#111"/><circle cx="12.5" cy="1.5" r="1.6" fill="#111"/></svg>
<div style="position:absolute;left:10px;top:690px;width:1863px;height:51px;background:#f9f9f9"></div>
<div style="position:absolute;left:10px;top:741px;width:1863px;height:1px;background:#e3e3e3"></div>
<div style="position:absolute;left:23px;top:708px;width:14px;height:14px;border:2px solid #111;box-sizing:border-box"></div>
<svg style="position:absolute;left:91px;top:708px" width="9" height="14" viewBox="0 0 9 14"><path d="M1.8 1.8 L6.8 6.8 L1.8 11.8" stroke="#1e1e1e" stroke-width="3.3" fill="none"/></svg>
<div class="t" style="left:107.00px;top:705.08px;font-size:18.26px;color:#333;font-weight:normal;font-style:normal;transform:scaleX(0.9576);">Part</div>
<div class="t" style="left:313.74px;top:705.20px;font-size:18.12px;color:#3d85c6;font-weight:normal;font-style:normal;">Part-0000105-01</div>
<div class="t" style="left:492.00px;top:705.20px;font-size:18.12px;color:#f39019;font-weight:normal;font-style:normal;">A</div>
<div class="t" style="left:744.79px;top:705.08px;font-size:18.26px;color:#444;font-weight:normal;font-style:normal;transform:scaleX(0.9805);">In Work</div>
<div class="t" style="left:839.79px;top:705.20px;font-size:18.12px;color:#3d85c6;font-weight:normal;font-style:normal;">CO-0000116</div>
<svg style="position:absolute;left:1072px;top:697.5px" width="35" height="35" viewBox="0 0 35 35"><defs><clipPath id="c5"><circle cx="17.5" cy="17.5" r="17.5"/></clipPath></defs><g clip-path="url(#c5)"><rect width="35" height="35" fill="#4fc3f7"/><path d="M35 0.6 L0 31.3 V35 H35 Z" fill="#29b6f6"/><ellipse cx="13.7" cy="9.2" rx="4.7" ry="6.6" fill="#fdd835"/><path d="M0 20.5 Q8 13.5 20 22.6 L8 30 L0 30 Z" fill="#43a047"/><path d="M11 17.9 Q16 19.5 20 22.6 L8 30 Z" fill="#388e3c"/><path d="M4 29.5 C13 27 18 23.5 22 20 C25 16.8 27.5 13.6 30 13.6 Q33 13.6 35 17.5 V35 H0 V30 Z" fill="#689f38"/></g></svg>
<svg style="position:absolute;left:1393px;top:705px" width="17" height="14" viewBox="0 0 17 14"><path d="M0.7 7 C4 -1.3 13 -1.3 16.3 7 C13 15.3 4 15.3 0.7 7 Z" fill="#fff" stroke="#f39a4a" stroke-width="1.3"/><circle cx="8.5" cy="7" r="5" fill="#1e9be6"/><path d="M8.5 2 A5 5 0 0 0 4.9 10.5 L12.1 3.5 A5 5 0 0 0 8.5 2Z" fill="#4cc0f5"/><circle cx="8.5" cy="7" r="1.5" fill="#333"/></svg>
<div class="t" style="left:1761.77px;top:704.22px;font-size:19.28px;color:#ff0000;font-weight:normal;font-style:normal;transform:scaleX(0.9465);">0.0</div>
<svg style="position:absolute;left:1843px;top:715px" width="14" height="3" viewBox="0 0 14 3"><circle cx="1.5" cy="1.5" r="1.6" fill="#111"/><circle cx="7" cy="1.5" r="1.6" fill="#111"/><circle cx="12.5" cy="1.5" r="1.6" fill="#111"/></svg>
<div style="position:absolute;left:10px;top:793px;width:1863px;height:1px;background:#e3e3e3"></div>
<div style="position:absolute;left:23px;top:760px;width:14px;height:14px;border:2px solid #111;box-sizing:border-box"></div>
<svg style="position:absolute;left:91px;top:760px" width="9" height="14" viewBox="0 0 9 14"><path d="M1.8 1.8 L6.8 6.8 L1.8 11.8" stroke="#1e1e1e" stroke-width="3.3" fill="none"/></svg>
<div class="t" style="left:107.00px;top:757.08px;font-size:18.26px;color:#333;font-weight:normal;font-style:normal;transform:scaleX(0.9576);">Part</div>
<div class="t" style="left:313.74px;top:757.20px;font-size:18.12px;color:#3d85c6;font-weight:normal;font-style:normal;">Part-0000106-01</div>
<div class="t" style="left:492.00px;top:757.20px;font-size:18.12px;color:#f39019;font-weight:normal;font-style:normal;">A</div>
<div class="t" style="left:744.79px;top:757.08px;font-size:18.26px;color:#444;font-weight:normal;font-style:normal;transform:scaleX(0.9805);">In Work</div>
<div class="t" style="left:839.79px;top:757.20px;font-size:18.12px;color:#3d85c6;font-weight:normal;font-style:normal;">CO-0000117</div>
<svg style="position:absolute;left:1072px;top:749.5px" width="35" height="35" viewBox="0 0 35 35"><defs><clipPath id="c6"><circle cx="17.5" cy="17.5" r="17.5"/></clipPath></defs><g clip-path="url(#c6)"><rect width="35" height="35" fill="#4fc3f7"/><path d="M35 0.6 L0 31.3 V35 H35 Z" fill="#29b6f6"/><ellipse cx="13.7" cy="9.2" rx="4.7" ry="6.6" fill="#fdd835"/><path d="M0 20.5 Q8 13.5 20 22.6 L8 30 L0 30 Z" fill="#43a047"/><path d="M11 17.9 Q16 19.5 20 22.6 L8 30 Z" fill="#388e3c"/><path d="M4 29.5 C13 27 18 23.5 22 20 C25 16.8 27.5 13.6 30 13.6 Q33 13.6 35 17.5 V35 H0 V30 Z" fill="#689f38"/></g></svg>
<svg style="position:absolute;left:1393px;top:757px" width="17" height="14" viewBox="0 0 17 14"><path d="M0.7 7 C4 -1.3 13 -1.3 16.3 7 C13 15.3 4 15.3 0.7 7 Z" fill="#fff" stroke="#f39a4a" stroke-width="1.3"/><circle cx="8.5" cy="7" r="5" fill="#1e9be6"/><path d="M8.5 2 A5 5 0 0 0 4.9 10.5 L12.1 3.5 A5 5 0 0 0 8.5 2Z" fill="#4cc0f5"/><circle cx="8.5" cy="7" r="1.5" fill="#333"/></svg>
<div class="t" style="left:1761.77px;top:756.22px;font-size:19.28px;color:#ff0000;font-weight:normal;font-style:normal;transform:scaleX(0.9465);">0.0</div>
<svg style="position:absolute;left:1843px;top:767px" width="14" height="3" viewBox="0 0 14 3"><circle cx="1.5" cy="1.5" r="1.6" fill="#111"/><circle cx="7" cy="1.5" r="1.6" fill="#111"/><circle cx="12.5" cy="1.5" r="1.6" fill="#111"/></svg>
<div style="position:absolute;left:10px;top:794px;width:1863px;height:51px;background:#f9f9f9"></div>
<div style="position:absolute;left:10px;top:845px;width:1863px;height:1px;background:#e3e3e3"></div>
<div style="position:absolute;left:23px;top:812px;width:14px;height:14px;border:2px solid #111;box-sizing:border-box"></div>
<svg style="position:absolute;left:91px;top:812px" width="9" height="14" viewBox="0 0 9 14"><path d="M1.8 1.8 L6.8 6.8 L1.8 11.8" stroke="#1e1e1e" stroke-width="3.3" fill="none"/></svg>
<div class="t" style="left:107.00px;top:809.08px;font-size:18.26px;color:#333;font-weight:normal;font-style:normal;transform:scaleX(0.9576);">Part</div>
<div class="t" style="left:313.74px;top:809.20px;font-size:18.12px;color:#3d85c6;font-weight:normal;font-style:normal;">Part-0000107-01</div>
<div class="t" style="left:492.00px;top:809.20px;font-size:18.12px;color:#f39019;font-weight:normal;font-style:normal;">A</div>
<div class="t" style="left:744.79px;top:809.08px;font-size:18.26px;color:#444;font-weight:normal;font-style:normal;transform:scaleX(0.9805);">In Work</div>
<div class="t" style="left:839.79px;top:809.20px;font-size:18.12px;color:#3d85c6;font-weight:normal;font-style:normal;">CO-0000118</div>
<svg style="position:absolute;left:1072px;top:801.5px" width="35" height="35" viewBox="0 0 35 35"><defs><clipPath id="c7"><circle cx="17.5" cy="17.5" r="17.5"/></clipPath></defs><g clip-path="url(#c7)"><rect width="35" height="35" fill="#4fc3f7"/><path d="M35 0.6 L0 31.3 V35 H35 Z" fill="#29b6f6"/><ellipse cx="13.7" cy="9.2" rx="4.7" ry="6.6" fill="#fdd835"/><path d="M0 20.5 Q8 13.5 20 22.6 L8 30 L0 30 Z" fill="#43a047"/><path d="M11 17.9 Q16 19.5 20 22.6 L8 30 Z" fill="#388e3c"/><path d="M4 29.5 C13 27 18 23.5 22 20 C25 16.8 27.5 13.6 30 13.6 Q33 13.6 35 17.5 V35 H0 V30 Z" fill="#689f38"/></g></svg>
<svg style="position:absolute;left:1393px;top:809px" width="17" height="14" viewBox="0 0 17 14"><path d="M0.7 7 C4 -1.3 13 -1.3 16.3 7 C13 15.3 4 15.3 0.7 7 Z" fill="#fff" stroke="#f39a4a" stroke-width="1.3"/><circle cx="8.5" cy="7" r="5" fill="#1e9be6"/><path d="M8.5 2 A5 5 0 0 0 4.9 10.5 L12.1 3.5 A5 5 0 0 0 8.5 2Z" fill="#4cc0f5"/><circle cx="8.5" cy="7" r="1.5" fill="#333"/></svg>
<div class="t" style="left:1761.77px;top:808.22px;font-size:19.28px;color:#ff0000;font-weight:normal;font-style:normal;transform:scaleX(0.9465);">0.0</div>
<svg style="position:absolute;left:1843px;top:819px" width="14" height="3" viewBox="0 0 14 3"><circle cx="1.5" cy="1.5" r="1.6" fill="#111"/><circle cx="7" cy="1.5" r="1.6" fill="#111"/><circle cx="12.5" cy="1.5" r="1.6" fill="#111"/></svg>
<div style="position:absolute;left:10px;top:846px;width:1863px;height:54px;background:#f8f9fb"></div>
<div style="position:absolute;left:10px;top:900px;width:1863px;height:1px;background:#e3e3e3"></div>
<div style="position:absolute;left:61px;top:859px;width:228px;height:28px;background:#fff;border:2px inset #767676;border-top-color:#111;border-left-color:#111;border-right-color:#767676;border-bottom-color:#767676;box-sizing:border-box"></div>
<div class="t" style="left:65.56px;top:865.12px;font-size:17.97px;color:#757575;font-weight:normal;font-style:normal;">Filter Type</div>
<div style="position:absolute;left:492px;top:859px;width:228px;height:28px;background:#fff;border:2px inset #767676;border-top-color:#111;border-left-color:#111;border-right-color:#767676;border-bottom-color:#767676;box-sizing:border-box"></div>
<div class="t" style="left:496.56px;top:865.12px;font-size:17.97px;color:#757575;font-weight:normal;font-style:normal;">Filter Rev</div>
<div style="position:absolute;left:1580px;top:859px;width:228px;height:28px;background:#fff;border:2px inset #767676;border-top-color:#111;border-left-color:#111;border-right-color:#767676;border-bottom-color:#767676;box-sizing:border-box"></div>
<div class="t" style="left:1584.56px;top:865.12px;font-size:17.97px;color:#757575;font-weight:normal;font-style:normal;">Filter Weight</div>
<div style="position:absolute;left:174px;top:764px;width:283px;height:54px;background:#fff;border:1px solid rgba(0,0,0,0.18);border-radius:5px;box-shadow:0 3px 8px rgba(0,0,0,0.18);box-sizing:border-box"></div>
<svg style="position:absolute;left:188px;top:817px" width="19" height="11" viewBox="0 0 19 11"><path d="M0 0 L9.5 10 L19 0" fill="#fff" stroke="rgba(0,0,0,0.2)" stroke-width="1"/><rect x="0" y="-2" width="19" height="2.5" fill="#fff"/></svg>
<div class="t" style="left:191.90px;top:781.25px;font-size:17.83px;color:#333;font-weight:normal;font-style:normal;transform:scaleX(0.9915);">About to update table : Default .</div>
</body></html>
